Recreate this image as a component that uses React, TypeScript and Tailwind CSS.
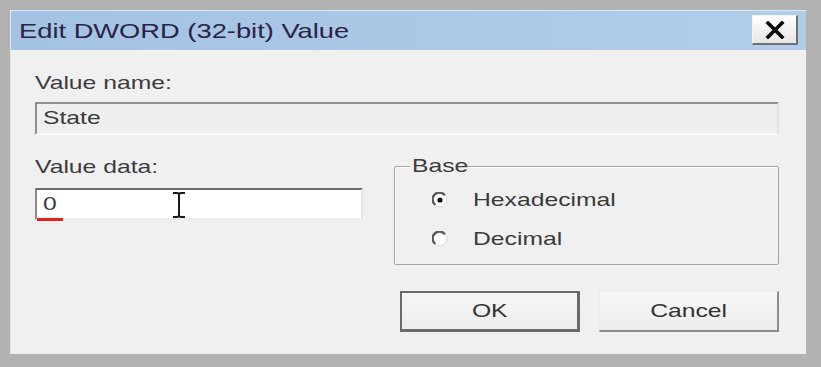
import { useState } from "react"

const font = { fontFamily: '"Liberation Sans", Arial, sans-serif' }

function Stretch({ children, className = "" }: { children: React.ReactNode; className?: string }) {
  return <span className={`inline-block origin-left scale-x-[1.3] ${className}`}>{children}</span>
}

function Radio({ checked }: { checked: boolean }) {
  return (
    <svg width="16" height="16" viewBox="0 0 16 16">
      <circle cx="8" cy="8" r="7" fill="#ffffff" stroke="#d6d6d6" strokeWidth="1" />
      <path d="M2.6 12.2 A6.3 6.3 0 0 1 12.2 2.6" fill="none" stroke="#5a5a5a" strokeWidth="2.4" strokeLinecap="round" />
      {checked && <circle cx="8" cy="8" r="2.6" fill="#111111" />}
    </svg>
  )
}

export default function App() {
  const [base, setBase] = useState<"hex" | "dec">("hex")

  return (
    <div className="w-[821px] h-[367px] bg-[#b2b2b2] pt-[10px] pl-[10px] pr-[15px] pb-[13px]" style={font}>
      <div className="h-full flex flex-col bg-[#f0f0f0] border-l border-[#e4e4e4]">
        {/* Title bar */}
        <div className="relative h-[40px] flex items-center pl-[8px] bg-gradient-to-r from-[#a4c2e3] to-[#b2cdea] border-t border-[#dbe7f5]">
          <Stretch className="text-[21px] text-[#2a2346]">Edit DWORD (32-bit) Value</Stretch>
          <button className="absolute right-[8px] top-[4px] w-[46px] h-[30px] flex items-center justify-center bg-gradient-to-b from-[#ffffff] to-[#e6e6e6] border border-[#f4f4f4] border-r-2 border-b-2 border-r-[#707070] border-b-[#707070]">
            <svg width="20" height="18" viewBox="0 0 20 18">
              <path d="M3 2 L17 16 M17 2 L3 16" stroke="#0a0a0a" strokeWidth="3.6" strokeLinecap="square" />
            </svg>
          </button>
        </div>

        {/* Body */}
        <div className="flex flex-col pl-[24px] pr-[27px] pt-[21px]">
          <div className="h-[24px] leading-[24px] text-[19px] text-[#3c3c3c]">
            <Stretch>Value name:</Stretch>
          </div>
          <div className="mt-[7px] h-[33px] flex items-center pl-[6px] bg-[#efefef] border-2 border-t-[#8f8f8f] border-l-[#8f8f8f] border-r-[#e2e2e2] border-b-[#fafafa] text-[19px] text-[#3a3a3a]">
            <Stretch>State</Stretch>
          </div>

          <div className="flex">
            <div className="flex flex-col">
              <div className="mt-[20px] h-[24px] leading-[24px] text-[19px] text-[#3c3c3c]">
                <Stretch>Value data:</Stretch>
              </div>
              <div className="relative mt-[9px] w-[328px] h-[32px] flex items-center pl-[6px] bg-white border-2 border-t-[#6e6e6e] border-l-[#8a8a8a] border-r-[#e6e6e6] border-b-[#ececec] text-[19px] text-[#3a3a3a]">
                <Stretch>0</Stretch>
                <span className="absolute left-[0px] -bottom-[3px] w-[26px] h-[3px] bg-[#e5231b]" />
                <svg className="absolute left-[134px] top-[1px]" width="16" height="28" viewBox="0 0 16 28">
                  <path d="M2 2 H6 Q8 2 8 4 V24 Q8 26 6 26 H2 M14 2 H10 Q8 2 8 4 M8 24 Q8 26 10 26 H14" fill="none" stroke="#1a1a1a" strokeWidth="2" />
                </svg>
              </div>
            </div>

            <div className="relative ml-[31px] mt-[31px] w-[385px] h-[99px] border border-[#a3a3a3] rounded-[2px] shadow-[inset_1px_1px_0_#ffffff] pl-[37px] pt-[22px] flex flex-col gap-[17px]">
              <span className="absolute -top-[13px] left-[15px] px-[2px] bg-[#f0f0f0] h-[24px] leading-[24px] text-[19px] text-[#3c3c3c] w-[50px]">
                <Stretch>Base</Stretch>
              </span>
              <label className="flex items-center h-[22px] cursor-default" onClick={() => setBase("hex")}>
                <Radio checked={base === "hex"} />
                <span className="ml-[25px] text-[19px] text-[#3a3a3a]">
                  <Stretch>Hexadecimal</Stretch>
                </span>
              </label>
              <label className="flex items-center h-[22px] cursor-default" onClick={() => setBase("dec")}>
                <Radio checked={base === "dec"} />
                <span className="ml-[25px] text-[19px] text-[#3a3a3a]">
                  <Stretch>Decimal</Stretch>
                </span>
              </label>
            </div>
          </div>

          <div className="mt-[26px] flex justify-end gap-[19px] pr-[0px]">
            <button className="w-[180px] h-[41px] flex items-center justify-center bg-gradient-to-b from-[#f6f6f6] to-[#ececec] border-2 border-[#6a6a6a] border-b-[3px] border-r-[3px] text-[19px] text-[#333]">
              <span className="inline-block scale-x-[1.3]">OK</span>
            </button>
            <button className="w-[180px] h-[41px] flex items-center justify-center bg-gradient-to-b from-[#f7f7f7] to-[#ededed] border border-[#e8e8e8] border-r-2 border-b-2 border-r-[#8c8c8c] border-b-[#8c8c8c] text-[19px] text-[#333]">
              <span className="inline-block scale-x-[1.3]">Cancel</span>
            </button>
          </div>
        </div>
      </div>
    </div>
  )
}
